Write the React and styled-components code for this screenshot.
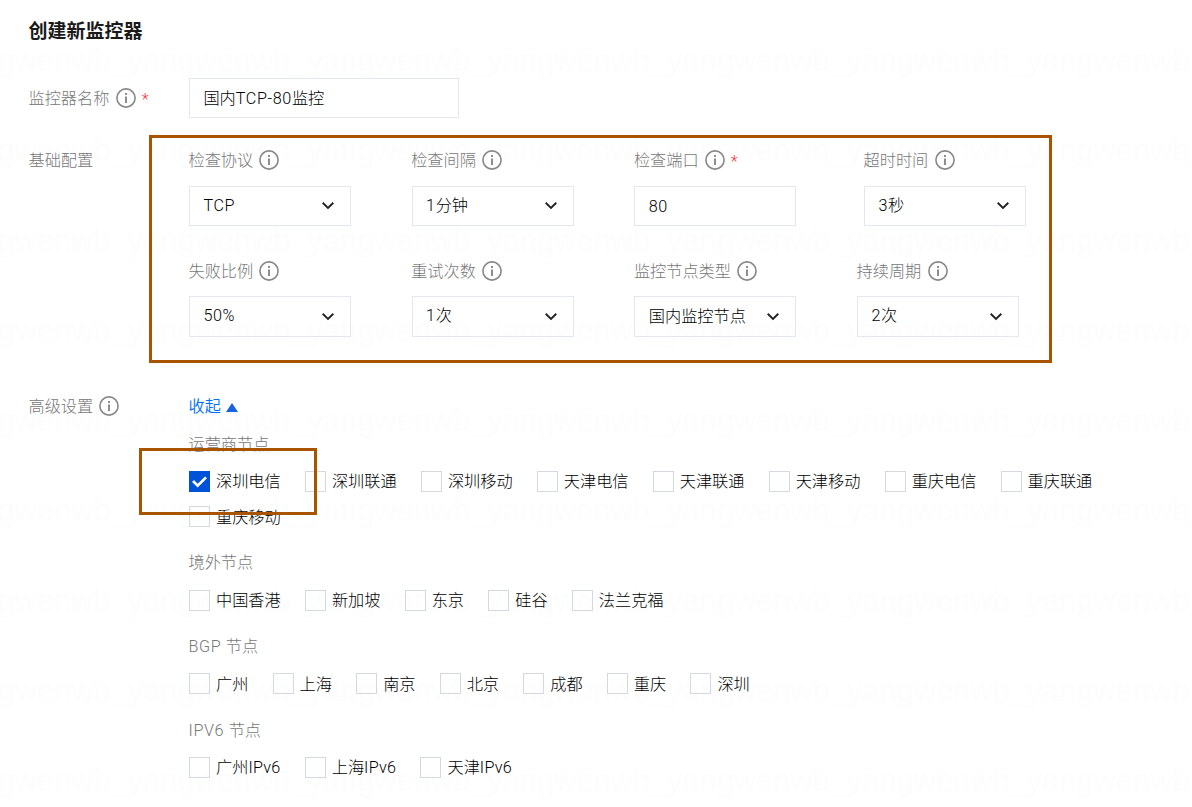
import React from "react";
import styled, { createGlobalStyle } from "styled-components";

const GlobalStyle = createGlobalStyle`
    * {
        box-sizing: border-box;
    }
    body {
        margin: 0;
        background: #fff;
        color: #000;
        font-family: "Liberation Sans", "Noto Sans CJK SC", sans-serif;
        font-size: 16.2px;
        font-weight: 300;
        overflow: hidden;
    }
`;

const Page = styled.main`
    position: relative;
    width: 1192px;
    height: 807px;
    padding: 18px 0 0 29px;
    overflow: hidden;
`;

const Watermark = styled.div`
    position: absolute;
    inset: 43px 0 0 -52px;
    z-index: -1;
    color: #fdfdfd;
    font-size: 30.8px;
    font-weight: 400;
    line-height: 36px;
    white-space: nowrap;
    pointer-events: none;
    user-select: none;
`;

const WatermarkLine = styled.div`
    height: 90px;
`;

const Title = styled.h1`
    margin: 0 0 32px;
    height: 28px;
    color: #1a1a1a;
    font-size: 19px;
    font-weight: 700;
    line-height: 28px;
    text-indent: -0.5px;
`;

const FormRow = styled.section`
    display: flex;
    margin-bottom: ${({ $gap }) => $gap}px;
`;

const RowLabel = styled.div`
    flex: 0 0 160px;
    padding-top: ${({ $top }) => $top || 0}px;
`;

const LabelBox = styled.div`
    display: flex;
    align-items: center;
    height: 24px;
    line-height: 24px;
    color: #777;
    text-indent: -0.5px;
    white-space: nowrap;

    svg {
        flex: none;
        margin-left: 6.2px;
    }
`;

const Required = styled.span`
    margin: 4px 0 0 6.5px;
    color: #f5383f;
    font-family: Roboto, sans-serif;
`;

const Control = styled.div`
    display: flex;
    align-items: center;
    justify-content: space-between;
    width: ${({ $width }) => $width || 162}px;
    height: ${({ $height }) => $height || 40}px;
    padding: 0 15px 0 13.4px;
    border: 1px solid #e5e7f0;
    line-height: 24px;
    white-space: nowrap;
`;

const Value = styled.span`
    padding-bottom: ${({ $select }) => ($select ? 2 : 0)}px;
`;

const Latin = styled.span`
    font-family: Roboto, sans-serif;
    letter-spacing: 0.6px;
`;

const Fields = styled.div`
    display: flex;
    flex-direction: column;
    gap: 33px;
`;

const FieldLine = styled.div`
    display: flex;
    gap: 60.7px;
`;

const Field = styled.div`
    display: flex;
    flex-direction: column;
    gap: ${({ $gap }) => $gap}px;
    margin-left: ${({ $shift }) => $shift || 0}px;
`;

const Toggle = styled.div`
    display: flex;
    align-items: center;
    gap: 5px;
    height: 24px;
    margin-bottom: 14px;
    color: #006eff;
    font-weight: 350;
    line-height: 24px;
    text-indent: -0.5px;
`;

const Triangle = styled.i`
    margin-top: 2px;
    border: 6px solid transparent;
    border-top: 0;
    border-bottom: 9px solid #1563e0;
`;

const Group = styled.div`
    margin-bottom: 21.6px;
`;

const GroupTitle = styled.div`
    height: 24px;
    margin-bottom: ${({ $tight }) => ($tight ? 13.3 : 14)}px;
    color: #777;
    line-height: 24px;
    text-indent: -0.5px;
`;

const Options = styled.div`
    display: flex;
    flex-wrap: wrap;
    gap: 11.6px 24.2px;
    width: 930px;
`;

const Option = styled.label`
    display: flex;
    align-items: center;
    gap: 6px;
    height: 24px;
    line-height: 24px;
    white-space: nowrap;

    ${Latin} {
        letter-spacing: 0.25px;
    }
`;

const Box = styled.span`
    display: flex;
    align-items: center;
    justify-content: center;
    width: 21px;
    height: 21px;
    margin-bottom: 0.4px;
    border: 1px solid ${({ $checked }) => ($checked ? "#0052d9" : "#d3d8e3")};
    background: ${({ $checked }) => ($checked ? "#0052d9" : "transparent")};
`;

const Highlight = styled.div`
    position: absolute;
    left: ${({ $x }) => $x}px;
    top: ${({ $y }) => $y}px;
    width: ${({ $w }) => $w}px;
    height: ${({ $h }) => $h}px;
    border: 3px solid #a95400;
    pointer-events: none;
`;

const InfoIcon = () => (
    <svg width="20" height="20" viewBox="0 0 20 20" fill="none">
        <circle cx="10" cy="10" r="9.1" stroke="#888" strokeWidth="1.6" />
        <path d="M10 8.4V15M10 5v2" stroke="#888" strokeWidth="1.9" />
    </svg>
);

const Chevron = () => (
    <svg width="14" height="10" viewBox="0 0 14 10" fill="none">
        <path d="M1.7 1.8 7 7l5.3-5.2" stroke="#222" strokeWidth="1.9" />
    </svg>
);

// latin letters and digits get their own, slightly wider set face
const mixed = (text) =>
    text
        .split(/([\w%-]+)/)
        .filter(Boolean)
        .map((part, i) => (/^[\w%-]/.test(part) ? <Latin key={i}>{part}</Latin> : part));

const Label = ({ text, info = true, required }) => (
    <LabelBox>
        {text}
        {info && <InfoIcon />}
        {required && <Required>*</Required>}
    </LabelBox>
);

const fieldLines = [
    [
        { label: "检查协议", value: "TCP" },
        { label: "检查间隔", value: "1分钟" },
        { label: "检查端口", value: "80", input: true, required: true },
        { label: "超时时间", value: "3秒", shift: 7 },
    ],
    [
        { label: "失败比例", value: "50%" },
        { label: "重试次数", value: "1次" },
        { label: "监控节点类型", value: "国内监控节点" },
        { label: "持续周期", value: "2次" },
    ],
];

const groups = [
    {
        title: "运营商节点",
        options: [
            "深圳电信",
            "深圳联通",
            "深圳移动",
            "天津电信",
            "天津联通",
            "天津移动",
            "重庆电信",
            "重庆联通",
            "重庆移动",
        ],
    },
    {
        title: "境外节点",
        options: ["中国香港", "新加坡", "东京", "硅谷", "法兰克福"],
    },
    {
        title: "BGP 节点",
        options: ["广州", "上海", "南京", "北京", "成都", "重庆", "深圳"],
    },
    {
        title: "IPV6 节点",
        options: ["广州IPv6", "上海IPv6", "天津IPv6"],
    },
];

const App = () => {
    return (
        <>
            <GlobalStyle />
            <Page>
                <Watermark aria-hidden="true">
                    {Array.from({ length: 9 }, (_, i) => (
                        <WatermarkLine key={i}>{"yangwenwb_".repeat(7)}</WatermarkLine>
                    ))}
                </Watermark>
                <Title>创建新监控器</Title>
                <FormRow $gap={30}>
                    <RowLabel $top={8}>
                        <Label text="监控器名称" required />
                    </RowLabel>
                    <Control $width={270}>
                        <Value>{mixed("国内TCP-80监控")}</Value>
                    </Control>
                </FormRow>
                <FormRow $gap={57}>
                    <RowLabel>
                        <Label text="基础配置" info={false} />
                    </RowLabel>
                    <Fields>
                        {fieldLines.map((line, i) => (
                            <FieldLine key={i}>
                                {line.map((field) => (
                                    <Field key={field.label} $gap={i ? 13 : 14} $shift={field.shift}>
                                        <Label text={field.label} required={field.required} />
                                        <Control $height={i ? 41 : 40}>
                                            <Value $select={!field.input}>{mixed(field.value)}</Value>
                                            {!field.input && <Chevron />}
                                        </Control>
                                    </Field>
                                ))}
                            </FieldLine>
                        ))}
                    </Fields>
                </FormRow>
                <FormRow $gap={0}>
                    <RowLabel>
                        <Label text="高级设置" />
                    </RowLabel>
                    <div>
                        <Toggle>
                            收起
                            <Triangle />
                        </Toggle>
                        {groups.map((group, i) => (
                            <Group key={group.title}>
                                <GroupTitle $tight={i === 0}>{mixed(group.title)}</GroupTitle>
                                <Options>
                                    {group.options.map((name) => (
                                        <Option key={name}>
                                            <Box $checked={name === "深圳电信"}>
                                                {name === "深圳电信" && (
                                                    <svg width="17" height="15" viewBox="0 0 17 15" fill="none">
                                                        <path d="m2 7 4.7 4.7L15 3.4" stroke="#fff" strokeWidth="2.7" />
                                                    </svg>
                                                )}
                                            </Box>
                                            <span>{mixed(name)}</span>
                                        </Option>
                                    ))}
                                </Options>
                            </Group>
                        ))}
                    </div>
                </FormRow>
                <Highlight $x={149} $y={135} $w={903} $h={228} />
                <Highlight $x={139} $y={448} $w={178} $h={67} />
            </Page>
        </>
    );
};

export default App;
